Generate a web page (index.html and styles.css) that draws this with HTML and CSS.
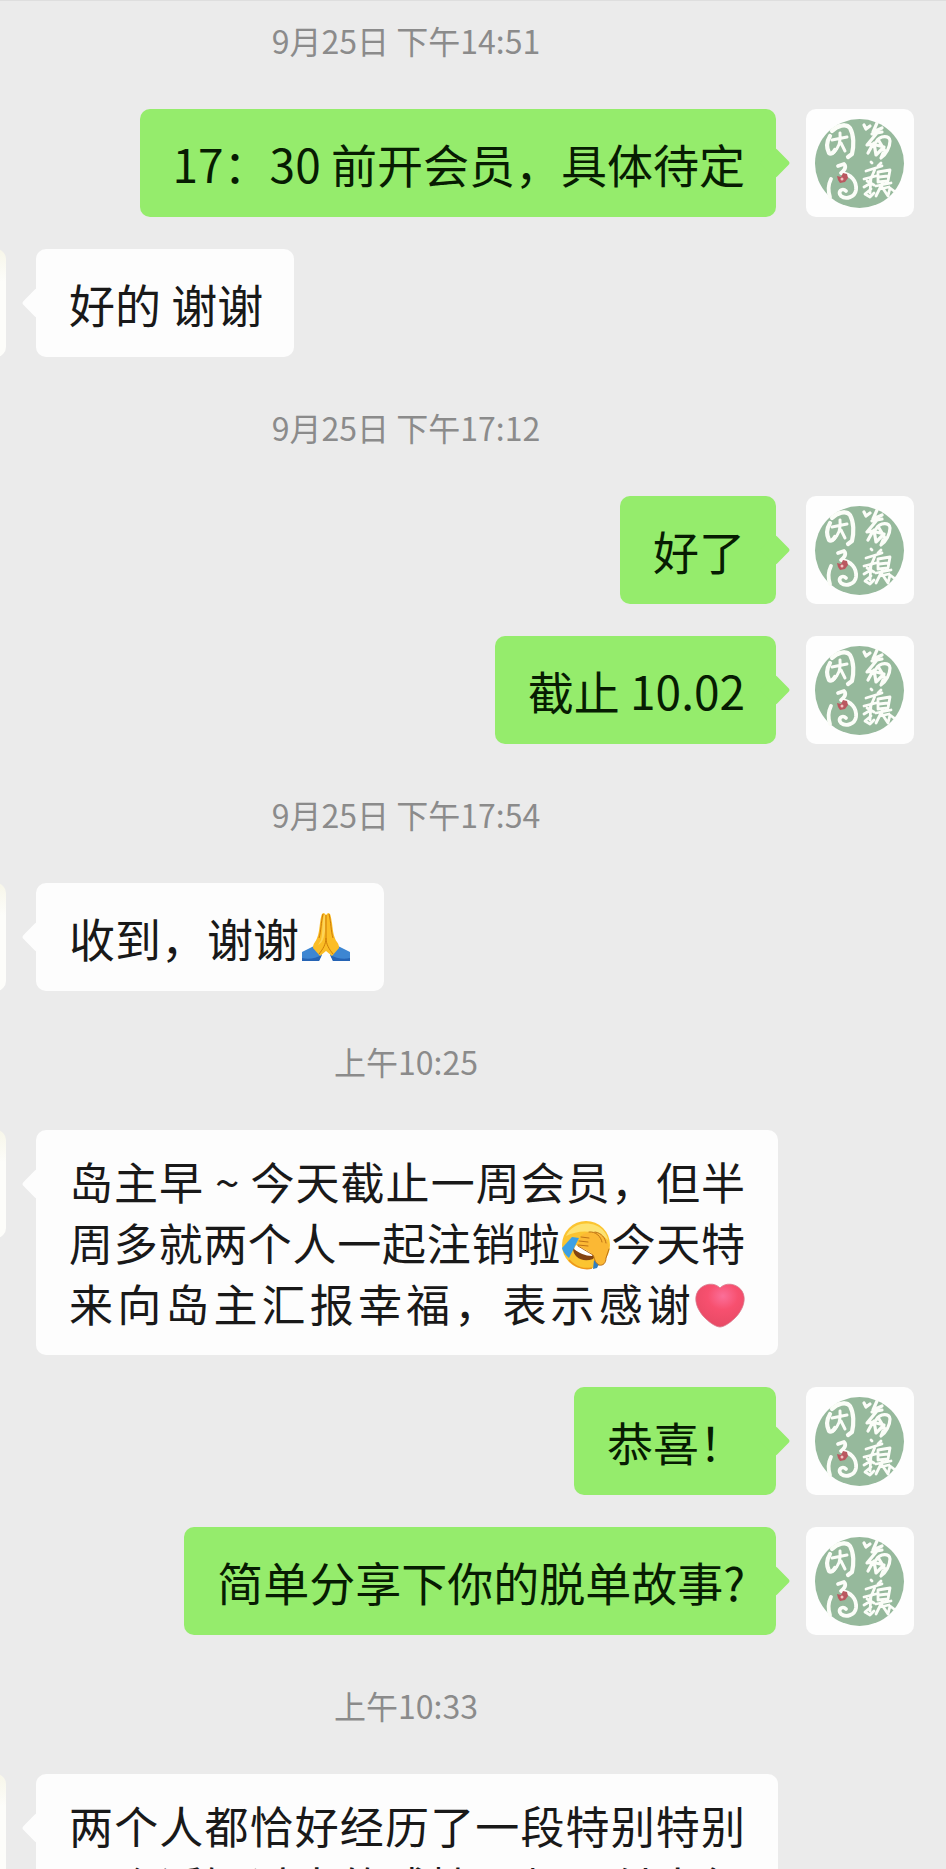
FILE: index.html
```html
<!DOCTYPE html>
<html lang="zh-CN">
<head>
<meta charset="utf-8">
<meta name="viewport" content="width=device-width, initial-scale=1">
<title>聊天</title>
<link rel="stylesheet" href="styles.css">
</head>
<body>
<svg class="defs" aria-hidden="true">
  <symbol id="seal" viewBox="0 0 108 108">
    <circle cx="53.500" cy="54.500" r="44.500" fill="#96b99c"/>
    <g fill="none" stroke="#fbfdf8" stroke-linecap="round" stroke-linejoin="round">
      <path stroke-width="4.200" d="M24 27C21 32 20 38 23 44C25 46 28 43 29 41M26 22C31 17 40 14 44 19C48 26 48 37 46 45L42 48"/>
      <path stroke-width="3" d="M26 31L41 28M34 24C35 33 32 40 27 44M35 34L39 42M32 17L38 16"/>
      <path stroke-width="3.800" d="M32 57L38 55C41 58 38 62 35 64C45 65 51 72 50 81C49 88 40 91 35 87C31 83 36 78 40 82M25 70C22 76 22 82 24 88"/>
      <path stroke-width="3.200" d="M58 16L60 20L64 17M71 14L67 23L76 19M66 25L76 23M71 24L61 36L67 35L62 44M70 33C74 26 84 26 84 32C84 38 80 46 75 49L77 44M68 34L70 46L78 38L70 36M73 32L79 42"/>
      <path stroke-width="2.800" d="M65 53L66 54M75 54L72 57M60 62L76 57M69 60L64 72M58 70L70 67M65 68L64 84M65 74L58 78M65 80L59 85L64 88L68 84M72 63L84 61L82 72L72 73ZM73 68L82 67M70 77L85 74M77 73L70 87M76 78L82 87L84 79L88 82M74 80L83 78M61 72L68 76"/>
    </g>
    <path d="M31 67l4 1 2-4 4 1 1 4-3 4-5 1-2-3z" fill="#ba5860"/>
    <circle cx="36" cy="70" r="1.500" fill="#f4c3c2"/>
  </symbol>
  <symbol id="pray" viewBox="0 0 50 50">
    <path fill="#3d86d2" d="M1 40L13 34L21 42L18 49H1Z"/>
    <path fill="#3d86d2" d="M49 40L37 34L29 42L32 49H49Z"/>
    <path fill="#2563b4" d="M1 46C8 48 15 46 21 43L18 49H1ZM49 46C42 48 35 46 29 43L32 49H49Z"/>
    <path fill="#fbbd25" d="M23 1C20 1 20 6 19 11C18 20 17 26 14 30C12 32 12 35 12 36L19 44L25 39L31 44L38 36C38 35 38 32 36 30C33 26 32 20 31 11C30 6 30 1 27 1L25 3Z"/>
    <path fill="#fdd457" d="M23 3C21 9 22 20 20 28L17 33C22 31 23 25 24 19V3Z"/>
    <path fill="none" stroke="#ce7c09" stroke-width="1" d="M25 3V26C25 32 22 37 18 42M25 26C25 32 28 37 32 42M22 2C20 10 20 20 18 26M28 2C30 10 30 20 32 26"/>
  </symbol>
  <symbol id="laugh" viewBox="0 0 50 50">
    <circle cx="25" cy="25" r="24" fill="#fbc431"/>
    <path fill="#fde271" d="M5 16C10 5 23 1 34 5C42 8 46 14 47 20C36 10 19 9 5 16Z"/>
    <path fill="#834311" d="M12 28C12 37 21 43 32 39L35 34Z"/>
    <path fill="#fff" d="M15 25L33 33L31 36C24 36 18 33 13 29Z"/>
    <path fill="#3ba0e5" d="M11 17L18 18L8 38C4 35 2 31 1 28Z"/>
    <path fill="#317fc0" d="M33 40L38 44L36 48L32 49Z"/>
    <path fill="#fbb834" d="M17 25L20 16C24 12 31 11 37 13C43 15 48 22 48 29L45 38C45 43 42 46 38 45C33 42 34 38 32 35C28 31 22 29 17 25Z"/>
    <path fill="none" stroke="#bd7215" stroke-width="1" stroke-linecap="round" d="M17 25L27 26M18 21L27 22M20 17L28 18M28 12C35 11 40 17 41 22M34 12C41 13 44 18 45 23M48 29L45 38C45 43 42 46 38 45C33 42 34 38 32 35L17 26"/>
    <path fill="none" stroke="#ed961c" stroke-width="1.500" d="M8 40C14 47 23 50 31 48"/>
  </symbol>
  <symbol id="heart" viewBox="0 0 50 50">
    <radialGradient id="heart-fill" cx="0.560" cy="0.280" r="0.700">
      <stop offset="0" stop-color="#fb6f99"/><stop offset="0.450" stop-color="#f7506f"/><stop offset="1" stop-color="#e84a65"/>
    </radialGradient>
    <path fill="url(#heart-fill)" stroke="#d8788b" stroke-width="0.800" d="M25 7C30 1 42 2 47 10C52 18 48 29 40 37C34 43 28 46 25 46C22 46 16 43 10 37C2 29-2 18 3 10C8 2 20 1 25 7Z"/>
  </symbol>
</svg>
<main class="chat">
  <time class="stamp">9月25日 下午14:51</time>
  <article class="row sent"><p class="bubble">17：30 前开会员，具体待定</p><svg class="avatar" role="img" aria-label="头像"><use href="#seal"/></svg></article>
  <article class="row"><span class="avatar peer"></span><p class="bubble">好的 谢谢</p></article>
  <time class="stamp">9月25日 下午17:12</time>
  <article class="row sent"><p class="bubble">好了</p><svg class="avatar" role="img" aria-label="头像"><use href="#seal"/></svg></article>
  <article class="row sent"><p class="bubble">截止 10.02</p><svg class="avatar" role="img" aria-label="头像"><use href="#seal"/></svg></article>
  <time class="stamp">9月25日 下午17:54</time>
  <article class="row"><span class="avatar peer"></span><p class="bubble">收到，谢谢<svg class="emoji wide" role="img" aria-label="合十"><use href="#pray"/></svg></p></article>
  <time class="stamp">上午10:25</time>
  <article class="row"><span class="avatar peer"></span><p class="bubble long">岛主早 ~ 今天截止一周会员，但半<br>周多就两个人一起注销啦<svg class="emoji" role="img" aria-label="笑哭捂脸"><use href="#laugh"/></svg>今天特<br>来向岛主汇报幸福，表示感谢<svg class="emoji" role="img" aria-label="爱心"><use href="#heart"/></svg></p></article>
  <article class="row sent"><p class="bubble">恭喜！</p><svg class="avatar" role="img" aria-label="头像"><use href="#seal"/></svg></article>
  <article class="row sent"><p class="bubble">简单分享下你的脱单故事?</p><svg class="avatar" role="img" aria-label="头像"><use href="#seal"/></svg></article>
  <time class="stamp">上午10:33</time>
  <article class="row"><span class="avatar peer"></span><p class="bubble long">两个人都恰好经历了一段特别特别<br>两个近短过去的感情，都是付出很</p></article>
</main>
</body>
</html>
```
FILE: styles.css
```css
* { box-sizing: border-box; }

body {
  margin: 0;
  height: 100vh;
  overflow: hidden;
  background: #ebebeb;
  color: #191919;
  font-family: "Noto Sans CJK SC", "Noto Sans", sans-serif;
}

.defs { display: block; width: 0; height: 0; }

/* The conversation runs past the left edge, cutting off the peer's avatar. */
.chat {
  display: flex;
  flex-direction: column;
  gap: 32px;
  margin-left: -134px;
  padding: 1px 32px 32px;
  border-top: 1px solid #dedede;
}

.stamp {
  height: 75px;
  color: #8b8b8b;
  font-size: 32px;
  line-height: 77px;
  text-align: center;
}

.row { display: flex; align-items: flex-start; gap: 30px; }
.row.sent { justify-content: flex-end; }

.avatar {
  flex: none;
  width: 108px;
  height: 108px;
  border-radius: 10px;
  background: #fefefe;
}
.peer { background: linear-gradient(#f7f6e9, #fdfdfa 30%); }

.bubble {
  position: relative;
  display: flex;
  align-items: center;
  min-height: 108px;
  margin: 0;
  padding: 21px 31px 21px 33px;
  border-radius: 10px;
  background: #fdfdfd;
  font-size: 46px;
  line-height: 61px;
  white-space: pre;
}
.bubble::before {
  content: "";
  position: absolute;
  top: 43px;
  left: -10px;
  width: 22px;
  height: 22px;
  border-radius: 3px;
  background: inherit;
  transform: rotate(45deg);
}
.sent .bubble { background: #95ec6c; color: #071c02; }
.sent .bubble::before { right: -10px; left: auto; }

.long {
  display: block;
  flex: 0 1 742px;
  padding-right: 33px;
  font-size: 44px;
  text-align: justify;
  text-align-last: justify;
  white-space: normal;
}

.emoji {
  width: 50px;
  height: 50px;
  vertical-align: -9px;
}
.wide { margin: 0 2px; }
```
